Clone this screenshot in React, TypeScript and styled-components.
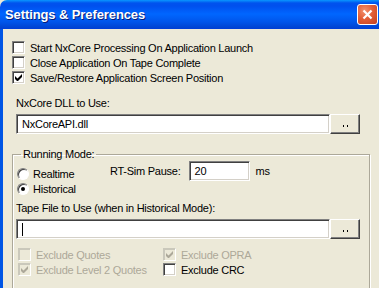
import React from "react";
import styled, { createGlobalStyle } from "styled-components";

const GlobalStyle = createGlobalStyle`
    html, body {
        margin: 0;
        padding: 0;
        background: #ece9d8;
    }
    body {
        font-family: "Liberation Sans", Arial, sans-serif;
        font-size: 11px;
        letter-spacing: -0.25px;
        color: #000;
    }
`;

const Window = styled.div`
    width: 379px;
    height: 288px;
    overflow: hidden;
    display: flex;
    flex-direction: column;
    background: #ece9d8;
`;

const TitleBar = styled.div`
    height: 29px;
    flex: none;
    display: flex;
    align-items: center;
    justify-content: space-between;
    padding: 0 1px 0 5px;
    box-sizing: border-box;
    border-top-left-radius: 7px;
    background: linear-gradient(
        180deg,
        #0997ff 0px,
        #0053ee 3px,
        #0050ee 6px,
        #0066ff 14px,
        #0055ea 22px,
        #0046d4 27px,
        #003dd7 29px
    );
`;

const Title = styled.span`
    font-family: "Liberation Sans", Arial, sans-serif;
    font-weight: bold;
    font-size: 13px;
    letter-spacing: -0.1px;
    color: #fff;
    text-shadow: 1px 1px 0 #0a1e78;
`;

const CloseButton = styled.div`
    width: 21px;
    height: 21px;
    box-sizing: border-box;
    border: 1px solid #fff;
    border-radius: 3px;
    background: radial-gradient(circle at 35% 30%, #f2926f 0%, #e35f38 45%, #c2401f 100%);
    display: flex;
    align-items: center;
    justify-content: center;
`;

const Body = styled.div`
    flex: 1;
    border-left: 3px solid #0055e5;
    padding: 11px 0 0 9px;
    display: flex;
    flex-direction: column;
`;

const CheckList = styled.div`
    display: flex;
    flex-direction: column;
`;

const CheckRow = styled.label<{ $disabled?: boolean }>`
    height: 15px;
    display: flex;
    align-items: center;
    gap: 5px;
    white-space: nowrap;
    color: ${p => (p.$disabled ? "#aca899" : "#000")};
`;

const Box = styled.span<{ $disabled?: boolean }>`
    width: 13px;
    height: 13px;
    box-sizing: border-box;
    flex: none;
    display: flex;
    align-items: center;
    justify-content: center;
    border: 1px solid;
    border-color: ${p => (p.$disabled ? "#cac8bb #fff #fff #cac8bb" : "#808080 #fff #fff #808080")};
    box-shadow: ${p =>
        p.$disabled ? "inset 1px 1px 0 #cac8bb" : "inset 1px 1px 0 #404040, inset -1px -1px 0 #d4d0c8"};
    background: ${p => (p.$disabled ? "#ece9d8" : "#fff")};
`;

const FieldLabel = styled.div`
    margin: 0 0 4px 4px;
    height: 13px;
    line-height: 13px;
`;

const FieldRow = styled.div`
    display: flex;
    margin-left: 4px;
    width: 344px;
`;

const Sunken = styled.div<{ $width?: number }>`
    flex: ${p => (p.$width ? "none" : "1")};
    width: ${p => (p.$width ? `${p.$width}px` : "auto")};
    height: 20px;
    box-sizing: border-box;
    border: 1px solid;
    border-color: #808080 #fff #fff #808080;
    box-shadow: inset 1px 1px 0 #404040, inset -1px -1px 0 #d4d0c8;
    background: #fff;
    display: flex;
    align-items: center;
    padding-left: 5px;
`;

const Caret = styled.span`
    width: 1px;
    height: 13px;
    background: #000;
`;

const BrowseButton = styled.div`
    width: 30px;
    height: 20px;
    flex: none;
    box-sizing: border-box;
    border: 1px solid;
    border-color: #fff #404040 #404040 #fff;
    box-shadow: inset -1px -1px 0 #808080, inset 1px 1px 0 #ece9d8;
    background: #ece9d8;
    display: flex;
    align-items: center;
    justify-content: center;
    gap: 3px;
    padding-top: 4px;
`;

const Dot = styled.span`
    width: 1px;
    height: 2px;
    background: #000;
`;

const Group = styled.fieldset`
    margin: 14px 0 0 0;
    width: 358px;
    box-sizing: border-box;
    border: 1px solid #aca899;
    box-shadow: 1px 1px 0 #fff, inset 1px 1px 0 #fff;
    border-bottom: none;
    border-radius: 0;
    padding: 3px 0 0 4px;
    flex: 1;
    min-width: 0;
`;

const Legend = styled.legend`
    padding: 0 2px;
    margin-left: 4px;
    line-height: 13px;
`;

const ModeRow = styled.div`
    display: flex;
    align-items: flex-start;
`;

const RadioList = styled.div`
    display: flex;
    flex-direction: column;
    width: 93px;
    margin-top: 2px;
`;

const RadioRow = styled.label`
    height: 15px;
    display: flex;
    align-items: center;
    gap: 4px;
`;

const Radio = styled.span<{ $checked?: boolean }>`
    width: 12px;
    height: 12px;
    box-sizing: border-box;
    border-radius: 50%;
    border: 1px solid;
    border-color: #808080 #fff #fff #808080;
    box-shadow: inset 1px 1px 0 #404040;
    background: #fff;
    display: flex;
    align-items: center;
    justify-content: center;
    &::after {
        content: "";
        width: 4px;
        height: 4px;
        border-radius: 50%;
        background: #000;
        display: ${p => (p.$checked ? "block" : "none")};
    }
`;

const PauseGroup = styled.div`
    display: flex;
    align-items: center;
    gap: 6px;
    margin-top: -3px;
`;

const PauseLabel = styled.span`
    margin-right: 2px;
`;

const Cols = styled.div`
    display: flex;
    margin-top: 8px;
    margin-left: 1px;
`;

const Col = styled.div<{ $width: number }>`
    width: ${p => p.$width}px;
    display: flex;
    flex-direction: column;
`;

const Check = ({ checked, disabled }: { checked?: boolean; disabled?: boolean }) => (
    <Box $disabled={disabled}>
        {checked && (
            <svg width="7" height="7" viewBox="0 0 7 7">
                <path d="M0 2v3l2 2h1l4-4V0L2.5 4.5z" fill={disabled ? "#aca899" : "#000"} />
            </svg>
        )}
    </Box>
);

const Browse = () => (
    <BrowseButton>
        <Dot />
        <Dot />
    </BrowseButton>
);

export default function App() {
    return (
        <Window>
            <GlobalStyle />
            <TitleBar>
                <Title>Settings &amp; Preferences</Title>
                <CloseButton>
                    <svg width="11" height="11" viewBox="0 0 11 11">
                        <path d="M1.5 1.5l8 8M9.5 1.5l-8 8" stroke="#fff" strokeWidth="2.2" />
                    </svg>
                </CloseButton>
            </TitleBar>
            <Body>
                <CheckList>
                    <CheckRow>
                        <Check />
                        Start NxCore Processing On Application Launch
                    </CheckRow>
                    <CheckRow>
                        <Check />
                        Close Application On Tape Complete
                    </CheckRow>
                    <CheckRow>
                        <Check checked />
                        Save/Restore Application Screen Position
                    </CheckRow>
                </CheckList>

                <FieldLabel style={{ marginTop: 12 }}>NxCore DLL to Use:</FieldLabel>
                <FieldRow>
                    <Sunken>NxCoreAPI.dll</Sunken>
                    <Browse />
                </FieldRow>

                <Group>
                    <Legend>Running Mode:</Legend>
                    <ModeRow>
                        <RadioList>
                            <RadioRow>
                                <Radio />
                                Realtime
                            </RadioRow>
                            <RadioRow>
                                <Radio $checked />
                                Historical
                            </RadioRow>
                        </RadioList>
                        <PauseGroup>
                            <PauseLabel>RT-Sim Pause:</PauseLabel>
                            <Sunken $width={61}>20</Sunken>
                            <span>ms</span>
                        </PauseGroup>
                    </ModeRow>

                    <FieldLabel style={{ marginTop: 6, marginLeft: -1 }}>
                        Tape File to Use (when in Historical Mode):
                    </FieldLabel>
                    <FieldRow style={{ marginLeft: -1 }}>
                        <Sunken>
                            <Caret />
                        </Sunken>
                        <Browse />
                    </FieldRow>

                    <Cols>
                        <Col $width={145}>
                            <CheckRow $disabled>
                                <Check disabled />
                                Exclude Quotes
                            </CheckRow>
                            <CheckRow $disabled>
                                <Check checked disabled />
                                Exclude Level 2 Quotes
                            </CheckRow>
                        </Col>
                        <Col $width={150}>
                            <CheckRow $disabled>
                                <Check checked disabled />
                                Exclude OPRA
                            </CheckRow>
                            <CheckRow>
                                <Check />
                                Exclude CRC
                            </CheckRow>
                        </Col>
                    </Cols>
                </Group>
            </Body>
        </Window>
    );
}
